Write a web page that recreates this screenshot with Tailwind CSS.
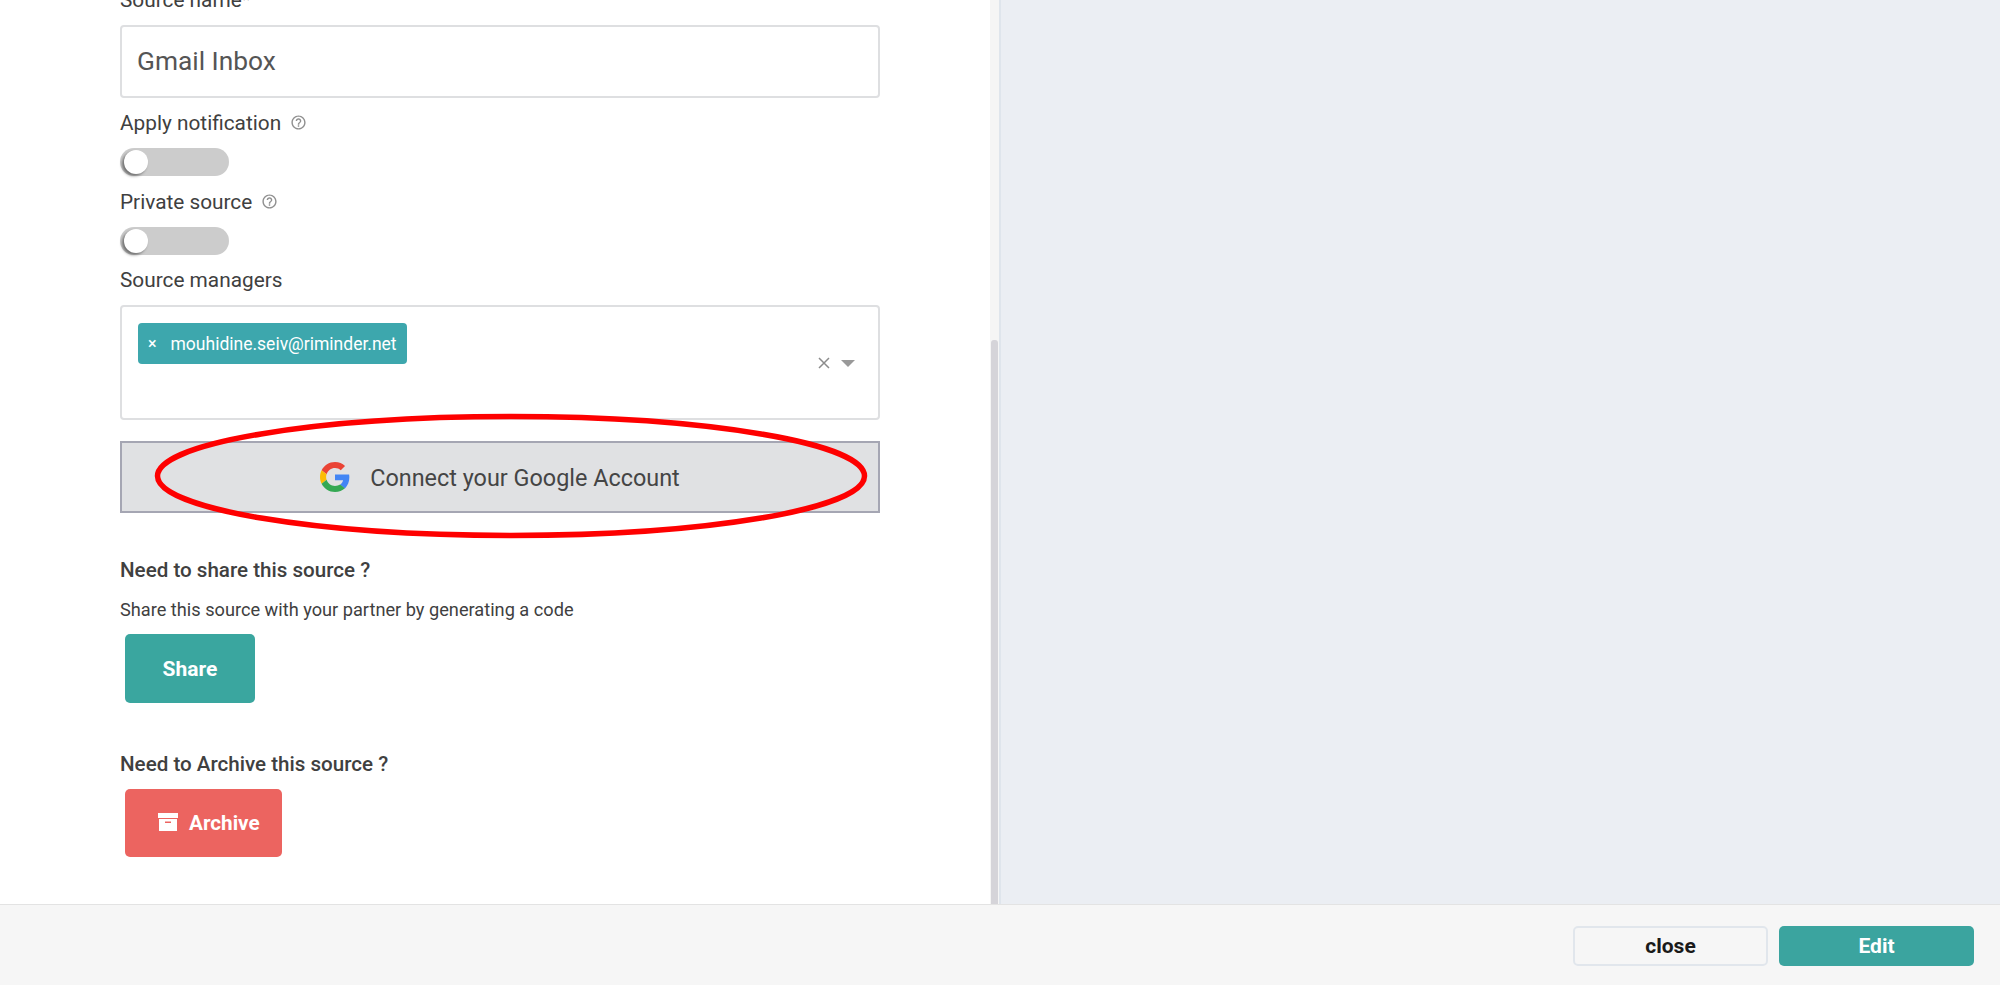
<!DOCTYPE html>
<html lang="en">
  <head>
    <meta charset="UTF-8" />
    <title>Source settings</title>
    <script src="https://cdn.jsdelivr.net/npm/@tailwindcss/browser@4"></script>
  </head>
  <body class="h-screen overflow-hidden flex flex-col bg-white font-['Roboto',sans-serif] text-[#404040]">
    <main class="flex-1 min-h-0 flex overflow-hidden">
      <!-- form column -->
      <section class="w-[990px] pl-[120px] overflow-hidden">
        <div class="w-[760px] -mt-[14px]">
          <div class="h-[28px] leading-[28px] text-[20.8px]">Source name*</div>
          <div class="mt-[11px] h-[73px] flex items-center pl-[15px] border-2 border-[#dedfe1] rounded-[4px] text-[26.3px] text-[#555555]">Gmail Inbox</div>

          <div class="mt-[11px] h-[28px] pt-[1px] flex items-center gap-[9px] text-[20.8px]">
            Apply notification
            <svg class="w-[17px] h-[17px] -mt-[3px] fill-[#8f8f8f]" viewBox="0 0 24 24"><path d="M11 18h2v-2h-2v2zm1-16C6.48 2 2 6.48 2 12s4.48 10 10 10 10-4.48 10-10S17.52 2 12 2zm0 18c-4.41 0-8-3.59-8-8s3.59-8 8-8 8 3.59 8 8-3.59 8-8 8zm0-14c-2.21 0-4 1.79-4 4h2c0-1.1.9-2 2-2s2 .9 2 2c0 2-3 1.75-3 5h2c0-2.25 3-2.5 3-5 0-2.21-1.79-4-4-4z"/></svg>
          </div>
          <div class="mt-[11px] w-[109px] h-[28px] rounded-full bg-[#cccccc] flex items-center pl-[4px]">
            <span class="w-[24px] h-[24px] rounded-full bg-white shadow-[-2px_2px_3px_rgba(0,0,0,0.45)]"></span>
          </div>

          <div class="mt-[12px] h-[28px] pt-[1px] flex items-center gap-[9px] text-[20.8px]">
            Private source
            <svg class="w-[17px] h-[17px] -mt-[3px] fill-[#8f8f8f]" viewBox="0 0 24 24"><path d="M11 18h2v-2h-2v2zm1-16C6.48 2 2 6.48 2 12s4.48 10 10 10 10-4.48 10-10S17.52 2 12 2zm0 18c-4.41 0-8-3.59-8-8s3.59-8 8-8 8 3.59 8 8-3.59 8-8 8zm0-14c-2.21 0-4 1.79-4 4h2c0-1.1.9-2 2-2s2 .9 2 2c0 2-3 1.75-3 5h2c0-2.25 3-2.5 3-5 0-2.21-1.79-4-4-4z"/></svg>
          </div>
          <div class="mt-[11px] w-[109px] h-[28px] rounded-full bg-[#cccccc] flex items-center pl-[4px]">
            <span class="w-[24px] h-[24px] rounded-full bg-white shadow-[-2px_2px_3px_rgba(0,0,0,0.45)]"></span>
          </div>

          <div class="mt-[11px] h-[28px] leading-[28px] text-[20.8px]">Source managers</div>
          <div class="mt-[11px] h-[115px] pl-[16px] pt-[16px] pr-[23px] border-2 border-[#dedfe1] rounded-[4px] flex items-start justify-between">
            <div class="h-[41px] w-[269px] bg-[#3da7ad] rounded-[4px] flex items-center pl-[10px] gap-[14px] text-white text-[17.5px]">
              <span class="text-[16px] font-medium">×</span>
              <span class="pt-[2px]">mouhidine.seiv@riminder.net</span>
            </div>
            <div class="h-[56px] flex items-center gap-[11px] mt-[12px] text-[#8c8c8c]">
              <svg class="w-[12px] h-[12px] stroke-[#8c8c8c] stroke-[1.5]" viewBox="0 0 12 12"><path d="M1 1l10 10M11 1L1 11"/></svg>
              <span class="w-0 h-0 border-x-[7px] border-x-transparent border-t-[7px] border-t-[#999999]"></span>
            </div>
          </div>

          <div class="relative mt-[21px]">
            <div class="h-[72px] flex items-center justify-center gap-[20px] bg-[#e0e1e3] border-2 border-[#a5a6b3] text-[23.4px] text-[#454545]">
              <svg class="w-[30px] h-[30px]" viewBox="0 0 48 48">
                <path fill="#EA4335" d="M24 9.5c3.54 0 6.71 1.22 9.21 3.6l6.85-6.85C35.9 2.38 30.47 0 24 0 14.62 0 6.51 5.38 2.56 13.22l7.98 6.19C12.43 13.72 17.74 9.5 24 9.5z"/>
                <path fill="#4285F4" d="M46.98 24.55c0-1.57-.15-3.09-.38-4.55H24v9.02h12.94c-.58 2.96-2.26 5.48-4.78 7.18l7.73 6c4.51-4.18 7.09-10.36 7.09-17.65z"/>
                <path fill="#FBBC05" d="M10.53 28.59c-.48-1.45-.76-2.99-.76-4.59s.27-3.14.76-4.59l-7.98-6.19C.92 16.46 0 20.12 0 24c0 3.88.92 7.54 2.56 10.78l7.97-6.19z"/>
                <path fill="#34A853" d="M24 48c6.48 0 11.93-2.13 15.89-5.81l-7.73-6c-2.15 1.45-4.92 2.3-8.16 2.3-6.26 0-11.57-4.22-13.47-9.91l-7.98 6.19C6.51 42.62 14.62 48 24 48z"/>
              </svg>
              <span class="pt-[3px]">Connect your Google Account</span>
            </div>
            <!-- hand drawn highlight over the button -->
            <svg class="absolute left-[35px] -top-[27px] w-[712px] h-[124px] fill-none stroke-[#fe0000] stroke-[5.5px] overflow-visible" viewBox="0 0 712 124"><ellipse cx="356" cy="62" rx="353.5" ry="59.5"/></svg>
          </div>

          <div class="mt-[43px] h-[28px] leading-[28px] text-[20.6px] font-medium">Need to share this source ?</div>
          <div class="mt-[12px] h-[28px] leading-[28px] text-[18.2px]">Share this source with your partner by generating a code</div>
          <button class="block ml-[5px] mt-[10px] w-[130px] h-[69px] pt-[2px] rounded-[5px] bg-[#3aa69f] text-white text-[21px] font-bold">Share</button>

          <div class="mt-[47px] h-[28px] leading-[28px] text-[20.6px] font-medium">Need to Archive this source ?</div>
          <button class="ml-[5px] mt-[11px] w-[157px] h-[68px] rounded-[5px] bg-[#ec6460] text-white text-[20.7px] font-bold flex items-center pl-[33px] gap-[11px]">
            <svg class="w-[20px] h-[18px] fill-white -mt-[2px]" viewBox="0 0 20 18"><path d="M0 0h20v5H0zM1 6h18v12H1zm6 2.5v1.5h6V8.5z" fill-rule="evenodd"/></svg>
            <span class="pt-[2px]">Archive</span>
          </button>
        </div>
      </section>
      <!-- scrollbar gutter -->
      <div class="w-[9px] bg-[#f5f5f5] pl-[1px] pt-[340px] pr-[1px]">
        <div class="h-full bg-[#d5d4d9] rounded-t-[3px]"></div>
      </div>
      <div class="flex-1 bg-[#ebeef3] border-l-2 border-[#dfe5ec]"></div>
    </main>
    <footer class="h-[81px] shrink-0 bg-[#f6f6f6] border-t border-[#e3e3e3] flex items-center justify-end gap-[11px] pt-[2px] pr-[26px] text-[21px] font-bold">
      <button class="w-[195px] h-[40px] pt-[1px] rounded-[5px] border-2 border-[#e1e6ec] text-[#1a1a1a]">close</button>
      <button class="w-[195px] h-[40px] pt-[1px] rounded-[5px] bg-[#3ba49f] text-white">Edit</button>
    </footer>
  </body>
</html>
